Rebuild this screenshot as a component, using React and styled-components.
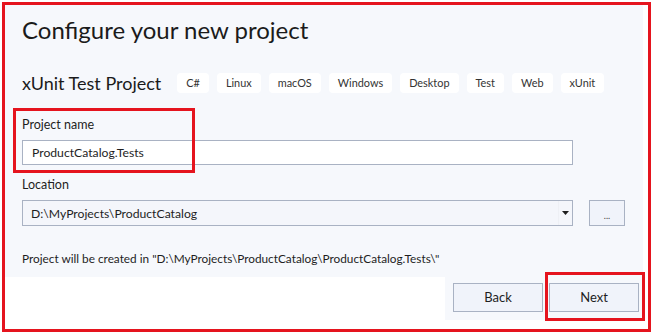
import React from "react";
import styled, { createGlobalStyle } from "styled-components";

const GlobalStyle = createGlobalStyle`
  html, body {
    margin: 0;
    padding: 0;
    background: #ffffff;
  }
  body {
    font-family: Lato, "Open Sans", sans-serif;
    color: #1e1e1e;
  }
`;

const Frame = styled.div`
  margin: 2px 0 0 2px;
  width: 649px;
  height: 330px;
  box-sizing: border-box;
  border: 3px solid #e5141e;
  padding-right: 5px;
  display: flex;
  flex-direction: column;
  background: #ffffff;
`;

const Panel = styled.div`
  background: #f6f8fc;
  height: 272px;
  box-sizing: border-box;
  padding: 10px 0 0 17px;
  display: flex;
  flex-direction: column;
`;

const Title = styled.h1`
  margin: 0;
  font-size: 24px;
  font-weight: 400;
  line-height: 30px;
  color: #1b1b1b;
`;

const SubRow = styled.div`
  display: flex;
  align-items: center;
  margin-top: 28px;
  height: 20px;
`;

const Subtitle = styled.h2`
  margin: 0 16px 0 0;
  font-size: 18px;
  font-weight: 400;
  color: #1b1b1b;
  line-height: 20px;
`;

const Tag = styled.span`
  height: 20px;
  line-height: 20px;
  padding: 0 9px;
  margin-right: 8px;
  background: #ffffff;
  border-radius: 4px;
  font-size: 10.9px;
  color: #333333;
`;

const Field = styled.div`
  position: relative;
  display: flex;
  flex-direction: column;
  margin-top: ${p => p.$top}px;
`;

const Label = styled.label`
  font-size: 12.5px;
  line-height: 16px;
  color: #1e1e1e;
  margin-bottom: 7px;
`;

const TextBox = styled.div`
  width: 551px;
  height: 25px;
  box-sizing: border-box;
  border: 1px solid #a9b2c3;
  background: #ffffff;
  padding-left: 9px;
  font-size: 12.2px;
  line-height: 23px;
  color: #1e1e1e;
`;

const PickRow = styled.div`
  display: flex;
  align-items: center;
`;

const Select = styled.div`
  width: 551px;
  height: 26px;
  box-sizing: border-box;
  border: 1px solid #a9b2c3;
  background: #f4f6fb;
  display: flex;
  align-items: center;
  font-size: 12.2px;
  color: #1e1e1e;
`;

const SelectText = styled.span`
  flex: 1;
  padding-left: 8px;
`;

const Caret = styled.span`
  width: 12px;
  height: 100%;
  display: flex;
  align-items: center;
  justify-content: center;
  border-left: 1px solid #eef0f5;
  margin-right: 1px;
  svg { display: block; }
`;

const SmallButton = styled.div`
  margin-left: 16px;
  width: 36px;
  height: 26px;
  box-sizing: border-box;
  border: 1px solid #a9b2c3;
  background: #f0f3fa;
  font-size: 9px;
  line-height: 30px;
  text-align: center;
  color: #444;
`;

const Info = styled.p`
  margin: 25px 0 0;
  font-size: 11.8px;
  line-height: 16px;
  color: #1e1e1e;
`;

const Footer = styled.div`
  display: flex;
  justify-content: flex-end;
`;

const ButtonBar = styled.div`
  width: 198px;
  height: 43px;
  box-sizing: border-box;
  background: #f6f8fc;
  padding: 6px 0 0 8px;
  display: flex;
  gap: 6px;
`;

const ButtonWrap = styled.div`
  position: relative;
`;

const Button = styled.div`
  width: 90px;
  height: 29px;
  box-sizing: border-box;
  border: 1px solid #a9b2c3;
  background: #f0f3fa;
  font-size: 13px;
  line-height: 27px;
  text-align: center;
  color: #1e1e1e;
`;

const Highlight = styled.div`
  position: absolute;
  left: ${p => p.$l}px;
  top: ${p => p.$t}px;
  width: ${p => p.$w}px;
  height: ${p => p.$h}px;
  box-sizing: border-box;
  border: 3px solid #e5141e;
  pointer-events: none;
`;

const tags = ["C#", "Linux", "macOS", "Windows", "Desktop", "Test", "Web", "xUnit"];

export default function App() {
  return (
    <>
      <GlobalStyle />
      <Frame>
        <Panel>
          <Title>Configure your new project</Title>
          <SubRow>
            <Subtitle>xUnit Test Project</Subtitle>
            {tags.map(t => (
              <Tag key={t}>{t}</Tag>
            ))}
          </SubRow>
          <Field $top={24}>
            <Label>Project name</Label>
            <TextBox>ProductCatalog.Tests</TextBox>
            <Highlight $l={-9} $t={-9} $w={182} $h={65} />
          </Field>
          <Field $top={12}>
            <Label>Location</Label>
            <PickRow>
              <Select>
                <SelectText>D:\MyProjects\ProductCatalog</SelectText>
                <Caret>
                  <svg width="7" height="4" viewBox="0 0 7 4">
                    <path d="M0 0h7L3.5 4z" fill="#1e1e1e" />
                  </svg>
                </Caret>
              </Select>
              <SmallButton>...</SmallButton>
            </PickRow>
          </Field>
          <Info>Project will be created in "D:\MyProjects\ProductCatalog\ProductCatalog.Tests\"</Info>
        </Panel>
        <Footer>
          <ButtonBar>
            <Button>Back</Button>
            <ButtonWrap>
              <Button>Next</Button>
              <Highlight $l={-4} $t={-11} $w={100} $h={49} />
            </ButtonWrap>
          </ButtonBar>
        </Footer>
      </Frame>
    </>
  );
}
